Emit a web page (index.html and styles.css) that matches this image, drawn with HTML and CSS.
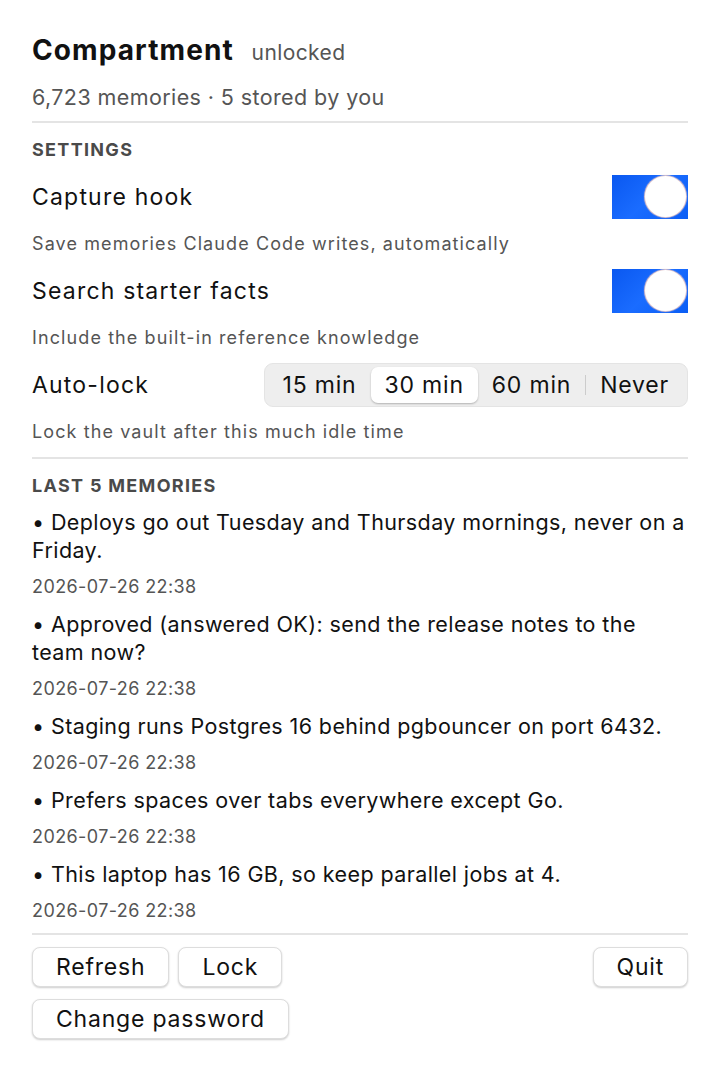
FILE: index.html
```html
<!DOCTYPE html>
<html lang="en">
<head>
  <meta charset="UTF-8" />
  <meta name="viewport" content="width=device-width, initial-scale=1" />
  <title>Compartment</title>
  <link rel="stylesheet" href="styles.css">
</head>
<body>
  <header class="head">
    <h1>Compartment <span class="state">unlocked</span></h1>
    <p class="count">6,723 memories · 5 stored by you</p>
  </header>

  <section class="section">
    <h2>Settings</h2>

    <div class="row">
      <span class="label">Capture hook</span>
      <div class="toggle on"><span class="knob"></span></div>
    </div>
    <p class="hint">Save memories Claude Code writes, automatically</p>

    <div class="row">
      <span class="label">Search starter facts</span>
      <div class="toggle on"><span class="knob"></span></div>
    </div>
    <p class="hint">Include the built-in reference knowledge</p>

    <div class="row">
      <span class="label">Auto-lock</span>
      <div class="segmented">
        <span class="seg">15 min</span>
        <span class="seg active">30 min</span>
        <span class="seg">60 min</span>
        <span class="sep"></span>
        <span class="seg">Never</span>
      </div>
    </div>
    <p class="hint">Lock the vault after this much idle time</p>
  </section>

  <section class="section">
    <h2 class="tight">Last 5 memories</h2>
    <ul class="memories">
      <li>
        <p class="text">• Deploys go out Tuesday and Thursday mornings, never on a Friday.</p>
        <p class="date">2026-07-26 22:38</p>
      </li>
      <li>
        <p class="text">• Approved (answered OK): send the release notes to the team now?</p>
        <p class="date">2026-07-26 22:38</p>
      </li>
      <li>
        <p class="text">• Staging runs Postgres 16 behind pgbouncer on port 6432.</p>
        <p class="date">2026-07-26 22:38</p>
      </li>
      <li>
        <p class="text">• Prefers spaces over tabs everywhere except Go.</p>
        <p class="date">2026-07-26 22:38</p>
      </li>
      <li>
        <p class="text">• This laptop has 16 GB, so keep parallel jobs at 4.</p>
        <p class="date">2026-07-26 22:38</p>
      </li>
    </ul>
  </section>

  <footer class="actions">
    <div class="btn-row">
      <button>Refresh</button>
      <button>Lock</button>
      <button class="push">Quit</button>
    </div>
    <div class="btn-row">
      <button>Change password</button>
    </div>
  </footer>
</body>
</html>
```

FILE: styles.css
```css
body {
  font-family: Inter, "Noto Sans", sans-serif;
  background: #ffffff;
  color: #111111;
  margin: 0;
  padding: 33px 32px 0;
}
p {
  margin: 0;
}
h1 {
  font-size: 28px;
  font-weight: 700;
  line-height: 34px;
  margin: 0;
  letter-spacing: 1.1px;
}
.state {
  font-size: 21px;
  font-weight: 400;
  color: #555555;
  margin-left: 10px;
  letter-spacing: 0.4px;
}
.count {
  font-size: 21.5px;
  line-height: 24px;
  letter-spacing: 0.4px;
  color: #555555;
  margin-top: 15px;
  padding-bottom: 12px;
}
.section {
  border-top: 2px solid #e4e4e4;
  padding-top: 17px;
}
h2 {
  font-size: 18px;
  font-weight: 700;
  line-height: 20px;
  color: #4a4a4a;
  text-transform: uppercase;
  letter-spacing: 1.3px;
  margin: 0 0 15px;
}
h2.tight {
  margin-bottom: 12px;
}
.row {
  display: flex;
  justify-content: space-between;
  align-items: center;
  height: 44px;
}
.label {
  font-size: 23px;
  letter-spacing: 1.2px;
}
.hint {
  font-size: 18px;
  line-height: 22px;
  letter-spacing: 1.1px;
  color: #555555;
  margin: 14px 0;
}
.toggle {
  width: 76px;
  height: 44px;
  background: linear-gradient(135deg, #0a58f0, #1a6cff 50%, #0b5ef5);
  position: relative;
}
.knob {
  position: absolute;
  right: 2px;
  top: 1px;
  width: 41px;
  height: 41px;
  border-radius: 50%;
  background: #ffffff;
  box-shadow: 0 0 1px 1px #e8c8c8;
}
.segmented {
  display: flex;
  align-items: center;
  background: #eeeeee;
  border-radius: 9px;
  border: 1px solid #e4e4e4;
  padding: 3px 4px;
  height: 36px;
}
.seg {
  font-size: 23px;
  letter-spacing: 0.8px;
  padding: 0 14px;
  line-height: 36px;
  border-radius: 7px;
}
.seg.active {
  background: #ffffff;
  box-shadow: 0 1px 2px rgba(0, 0, 0, 0.25);
}
.sep {
  width: 1px;
  height: 20px;
  background: #cccccc;
}
.memories {
  list-style: none;
  margin: 0;
  padding: 0;
}
.memories li {
  margin-bottom: 11px;
}
.memories li:last-child {
  margin-bottom: 10px;
}
.text {
  font-size: 21.5px;
  line-height: 28px;
  letter-spacing: 0.4px;
}
.date {
  font-size: 18px;
  line-height: 24px;
  letter-spacing: 0.4px;
  color: #555555;
  margin-top: 11px;
}
.actions {
  border-top: 2px solid #e4e4e4;
  padding-top: 12px;
}
.btn-row {
  display: flex;
  gap: 9px;
  margin-bottom: 12px;
}
button {
  font-family: Inter, "Noto Sans", sans-serif;
  font-size: 23px;
  letter-spacing: 0.8px;
  color: #111111;
  background: #ffffff;
  border: 1px solid #dddddd;
  border-radius: 8px;
  box-shadow: 0 1px 2px rgba(0, 0, 0, 0.2);
  height: 40px;
  padding: 0 23px;
}
.push {
  margin-left: auto;
}
```
